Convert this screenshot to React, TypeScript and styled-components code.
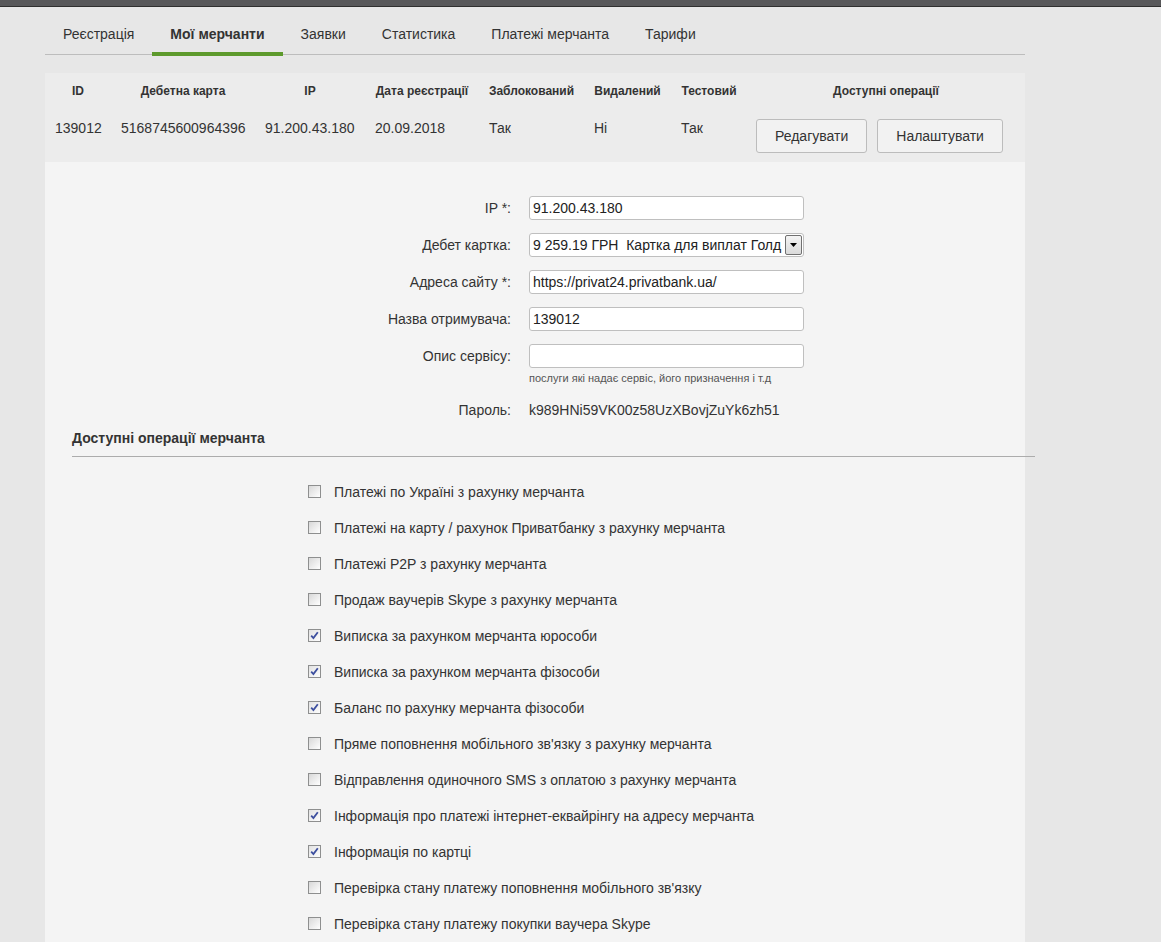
import styled, { createGlobalStyle } from "styled-components";

const GlobalStyle = createGlobalStyle`
  html, body {
    margin: 0;
    padding: 0;
    background: #e7e7e7;
    font-family: "Liberation Sans", Arial, sans-serif;
    color: #333;
  }
`;

const tabs = ["Реєстрація", "Мої мерчанти", "Заявки", "Статистика", "Платежі мерчанта", "Тарифи"];

const columns = [
  { title: "ID", width: 66 },
  { title: "Дебетна карта", width: 144 },
  { title: "IP", width: 110 },
  { title: "Дата реєстрації", width: 114 },
  { title: "Заблокований", width: 105 },
  { title: "Видалений", width: 87 },
  { title: "Тестовий", width: 76 },
  { title: "Доступні операції", width: 278 },
];

const merchant = ["139012", "5168745600964396", "91.200.43.180", "20.09.2018", "Так", "Ні", "Так"];

const operations = [
  { label: "Платежі по Україні з рахунку мерчанта", checked: false },
  { label: "Платежі на карту / рахунок Приватбанку з рахунку мерчанта", checked: false },
  { label: "Платежі P2P з рахунку мерчанта", checked: false },
  { label: "Продаж ваучерів Skype з рахунку мерчанта", checked: false },
  { label: "Виписка за рахунком мерчанта юрособи", checked: true },
  { label: "Виписка за рахунком мерчанта фізособи", checked: true },
  { label: "Баланс по рахунку мерчанта фізособи", checked: true },
  { label: "Пряме поповнення мобільного зв'язку з рахунку мерчанта", checked: false },
  { label: "Відправлення одиночного SMS з оплатою з рахунку мерчанта", checked: false },
  { label: "Інформація про платежі інтернет-еквайрінгу на адресу мерчанта", checked: true },
  { label: "Інформація по картці", checked: true },
  { label: "Перевірка стану платежу поповнення мобільного зв'язку", checked: false },
  { label: "Перевірка стану платежу покупки ваучера Skype", checked: false },
];

const App = () => {
  return (
    <>
      <GlobalStyle />
      <TopBar />
      <Main>
        <Tabs>
          {tabs.map((t, i) => (
            <Tab key={t} $active={i === 1}>
              {t}
            </Tab>
          ))}
        </Tabs>

        <TablePanel>
          <MerchantTable>
            <thead>
              <tr>
                {columns.map((c) => (
                  <Th key={c.title} $w={c.width}>
                    {c.title}
                  </Th>
                ))}
              </tr>
            </thead>
            <tbody>
              <tr>
                {merchant.map((v, i) => (
                  <Td key={i}>{v}</Td>
                ))}
                <Td>
                  <ButtonRow>
                    <ActionButton>Редагувати</ActionButton>
                    <ActionButton>Налаштувати</ActionButton>
                  </ButtonRow>
                </Td>
              </tr>
            </tbody>
          </MerchantTable>
        </TablePanel>

        <FormPanel>
          <FormGrid>
            <Label>IP *:</Label>
            <TextInput defaultValue="91.200.43.180" />

            <Label>Дебет картка:</Label>
            <SelectBox>
              <SelectText>9 259.19 ГРН  Картка для виплат Голд</SelectText>
              <SelectArrow>
                <svg width="7" height="4" viewBox="0 0 7 4">
                  <path d="M0 0 H7 L3.5 4 Z" fill="#000" />
                </svg>
              </SelectArrow>
            </SelectBox>

            <Label>Адреса сайту *:</Label>
            <TextInput defaultValue="https://privat24.privatbank.ua/" />

            <Label>Назва отримувача:</Label>
            <TextInput defaultValue="139012" />

            <Label $top>Опис сервісу:</Label>
            <FieldStack>
              <TextInput defaultValue="" />
              <Hint>послуги які надає сервіс, його призначення і т.д</Hint>
            </FieldStack>

            <Label>Пароль:</Label>
            <PlainValue>k989HNi59VK00z58UzXBovjZuYk6zh51</PlainValue>
          </FormGrid>

          <SectionTitle>Доступні операції мерчанта</SectionTitle>

          <OperationList>
            {operations.map((op) => (
              <OperationRow key={op.label}>
                <CheckBox $checked={op.checked}>
                  {op.checked && (
                    <svg width="9" height="9" viewBox="0 0 9 9">
                      <path d="M1.2 4.6 L3.4 7 L7.8 1.2" fill="none" stroke="#3d4f9f" strokeWidth="1.8" />
                    </svg>
                  )}
                </CheckBox>
                <span>{op.label}</span>
              </OperationRow>
            ))}
          </OperationList>
        </FormPanel>
      </Main>
    </>
  );
};

export default App;

const TopBar = styled.div`
  height: 6px;
  background: #58585a;
  border-bottom: 1px solid #2f2f2f;
`;

const Main = styled.main`
  width: 980px;
  margin-left: 45px;
`;

const Tabs = styled.nav`
  display: flex;
  align-items: flex-end;
  border-bottom: 1px solid #bdbdbd;
`;

const Tab = styled.div<{ $active?: boolean }>`
  padding: 19px 18px 9px;
  line-height: 17px;
  font-size: 14px;
  font-weight: ${(p) => (p.$active ? "bold" : "normal")};
  color: #333;
  margin-bottom: -2px;
  border-bottom: 4px solid ${(p) => (p.$active ? "#5d9a2c" : "transparent")};
  cursor: pointer;
`;

const TablePanel = styled.section`
  margin-top: 18px;
  background: #ececec;
`;

const MerchantTable = styled.table`
  width: 980px;
  table-layout: fixed;
  border-collapse: collapse;
`;

const Th = styled.th<{ $w: number }>`
  width: ${(p) => p.$w}px;
  padding: 11px 0 9px;
  font-size: 12px;
  line-height: 14px;
  font-weight: bold;
  text-align: center;
  color: #333;
`;

const Td = styled.td`
  padding: 13px 10px 10px;
  font-size: 14px;
  line-height: 17px;
  vertical-align: top;
  white-space: nowrap;
  color: #333;
`;

const ButtonRow = styled.div`
  display: flex;
  gap: 10px;
  margin: -1px 0 -1px -1px;
`;

const ActionButton = styled.button`
  height: 34px;
  padding: 0 18px;
  border: 1px solid #bcbcbc;
  border-radius: 3px;
  background: #f2f2f2;
  font-family: "Liberation Sans", Arial, sans-serif;
  font-size: 14px;
  color: #333;
  cursor: pointer;
`;

const FormPanel = styled.section`
  background: #f4f4f4;
  padding-top: 34px;
  padding-bottom: 20px;
  min-height: 760px;
`;

const FormGrid = styled.div`
  display: grid;
  grid-template-columns: 466px 275px;
  column-gap: 18px;
  row-gap: 13px;
  align-items: center;
`;

const Label = styled.label<{ $top?: boolean }>`
  text-align: right;
  font-size: 14px;
  line-height: 24px;
  color: #333;
  align-self: ${(p) => (p.$top ? "start" : "center")};
`;

const TextInput = styled.input`
  box-sizing: border-box;
  width: 275px;
  height: 24px;
  padding: 0 3px;
  border: 1px solid #bfbfbf;
  border-radius: 3px;
  background: #fff;
  font-family: "Liberation Sans", Arial, sans-serif;
  font-size: 14px;
  color: #222;
  outline: none;
`;

const SelectBox = styled.div`
  box-sizing: border-box;
  width: 275px;
  height: 24px;
  display: flex;
  align-items: center;
  border: 1px solid #bfbfbf;
  border-radius: 3px;
  background: #fff;
  padding: 0 1px 0 3px;
`;

const SelectText = styled.span`
  flex: 1;
  overflow: hidden;
  white-space: pre;
  font-size: 14px;
  color: #222;
`;

const SelectArrow = styled.span`
  box-sizing: border-box;
  width: 17px;
  height: 20px;
  display: flex;
  align-items: center;
  justify-content: center;
  border: 1px solid #707070;
  border-radius: 2px;
  background: linear-gradient(#f4f4f4, #dadada);
`;

const FieldStack = styled.div`
  display: flex;
  flex-direction: column;
`;

const Hint = styled.span`
  margin-top: 3px;
  font-size: 11px;
  line-height: 14px;
  color: #555;
`;

const PlainValue = styled.span`
  font-size: 14px;
  line-height: 24px;
  color: #333;
`;

const SectionTitle = styled.h3`
  margin: 8px -10px 0 27px;
  padding-bottom: 9px;
  border-bottom: 1px solid #acacac;
  font-size: 14px;
  line-height: 17px;
  font-weight: bold;
  color: #333;
`;

const OperationList = styled.ul`
  list-style: none;
  margin: 17px 0 0;
  padding: 0 0 0 263px;
`;

const OperationRow = styled.li`
  display: flex;
  align-items: center;
  gap: 13px;
  height: 36px;
  font-size: 14px;
  color: #333;
`;

const CheckBox = styled.span<{ $checked?: boolean }>`
  box-sizing: border-box;
  width: 13px;
  height: 13px;
  display: flex;
  align-items: center;
  justify-content: center;
  margin-top: -1px;
  border: 1px solid #8e8f8f;
  background: ${(p) =>
    p.$checked ? "linear-gradient(135deg, #e2e2e2, #fdfdfd)" : "linear-gradient(135deg, #d8d8d8, #ffffff)"};
`;
